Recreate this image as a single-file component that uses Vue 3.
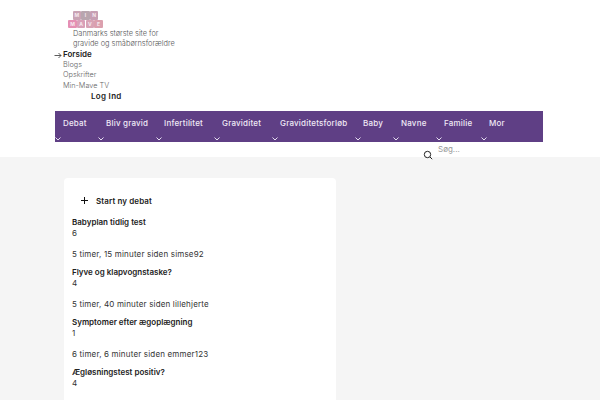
<script setup>
const menu = [
  { label: 'Forside', bold: true },
  { label: 'Blogs' },
  { label: 'Opskrifter' },
  { label: 'Min-Mave TV' }
]
const nav = [
  { t: 'Debat', w: 43 },
  { t: 'Bliv gravid', w: 58 },
  { t: 'Infertilitet', w: 58 },
  { t: 'Graviditet', w: 58 },
  { t: 'Graviditetsforløb', w: 83 },
  { t: 'Baby', w: 38 },
  { t: 'Navne', w: 43 },
  { t: 'Familie', w: 45 },
  { t: 'Mor', w: 60 }
]
const posts = [
  { title: 'Babyplan tidlig test', n: 6, meta: '5 timer, 15 minuter siden simse92' },
  { title: 'Flyve og klapvognstaske?', n: 4, meta: '5 timer, 40 minuter siden lillehjerte' },
  { title: 'Symptomer efter ægoplægning', n: 1, meta: '6 timer, 6 minuter siden emmer123' },
  { title: 'Ægløsningstest positiv?', n: 4, meta: '' }
]
const blocks = [
  [{ l: 'M', c: '#c9a3b4' }, { l: 'I', c: '#b8a6ae' }, { l: 'N', c: '#c79fb3' }],
  [{ l: 'M', c: '#e58fb4' }, { l: 'A', c: '#d9a0b8' }, { l: 'V', c: '#d8a3b5' }, { l: 'E', c: '#dba0ae' }]
]
</script>

<template>
  <div class="page">
    <header class="top">
      <div class="wrap">
        <div class="logo">
          <div v-for="(row, i) in blocks" :key="i" class="logo-row">
            <span v-for="(b, j) in row" :key="j" class="block" :style="{ background: b.c }">{{ b.l }}</span>
          </div>
        </div>
        <p class="tagline">Danmarks største site for<br>gravide og småbørnsforældre</p>
        <ul class="menu">
          <li v-for="m in menu" :key="m.label" :class="{ bold: m.bold }">
            <svg v-if="m.bold" class="arrow" width="8" height="8" viewBox="0 0 8 8"><path d="M0.5 4.5H7M4.5 2L7 4.5L4.5 7" fill="none" stroke="#333" stroke-width="0.8"/></svg>
            {{ m.label }}
          </li>
        </ul>
        <div class="login">Log Ind</div>
        <nav class="nav">
          <div v-for="n in nav" :key="n.t" class="nav-item" :style="{ width: n.w + 'px' }">
            <span class="nav-label">{{ n.t }}</span>
            <svg class="chev" width="6" height="4" viewBox="0 0 6 4"><path d="M0.5 0.5L3 3L5.5 0.5" fill="none" stroke="#e6def0" stroke-width="1"/></svg>
          </div>
        </nav>
        <div class="search">
          <svg width="10" height="10" viewBox="0 0 10 10"><circle cx="4.5" cy="4.5" r="3.2" fill="none" stroke="#222" stroke-width="1"/><path d="M7 7L9.2 9.2" stroke="#222" stroke-width="1"/></svg>
          <span class="search-text">Søg...</span>
        </div>
      </div>
    </header>
    <main class="main">
      <section class="card">
        <div class="start">
          <svg width="7" height="7" viewBox="0 0 7 7"><path d="M3.5 0V7M0 3.5H7" stroke="#111" stroke-width="1"/></svg>
          <span>Start ny debat</span>
        </div>
        <article v-for="p in posts" :key="p.title" class="post">
          <div class="title">{{ p.title }}</div>
          <div class="count">{{ p.n }}</div>
          <div class="meta">{{ p.meta }}</div>
        </article>
      </section>
    </main>
  </div>
</template>

<style>
html, body { margin: 0; background: #fff; }
</style>

<style scoped>
.page {
  width: 600px;
  height: 400px;
  overflow: hidden;
  font-family: Inter, sans-serif;
  font-size: 8px;
  color: #333;
  background: #f5f5f5;
}
.top { background: #fff; height: 157px; }
.wrap { margin-left: 55px; width: 488px; padding-top: 11px; }
.logo { margin-left: 13px; width: 35px; height: 18px; display: flex; flex-direction: column; align-items: center; }
.logo-row { display: flex; gap: 0.5px; }
.block { width: 8.2px; height: 8.5px; border-radius: 1px; font-size: 5px; line-height: 8.5px; text-align: center; color: #f6e8ef; font-weight: 700; overflow: hidden; }
.tagline { margin: 0 0 0 18px; line-height: 10px; color: #555; font-size: 7.4px; font-weight: 300; }
.menu { list-style: none; margin: 0; padding: 0 0 0 8px; }
.menu li { line-height: 10.5px; position: relative; color: #666; font-weight: 300; font-size: 7.3px; }
.menu li.bold { font-weight: 600; color: #222; font-size: 8px; }
.arrow { position: absolute; left: -9px; top: 2px; }
.login { margin-left: 36px; font-weight: 600; color: #222; line-height: 10px; letter-spacing: 0.3px; }
.nav { background: #5f3f85; height: 31px; margin-top: 10px; display: flex; box-sizing: border-box; }
.nav-item { position: relative; box-sizing: border-box; padding: 7px 0 0 8px; color: #efe9f5; font-weight: 500; white-space: nowrap; letter-spacing: 0.2px; line-height: 10px; }
.chev { position: absolute; left: 0; bottom: 1px; }
.search { display: flex; margin-left: 368px; margin-top: 2px; gap: 5px; align-items: flex-start; }
.search svg { margin-top: 6px; }
.search-text { color: #999; line-height: 11px; }
.main { padding: 21px 0 0 64px; }
.card { width: 272px; background: #fff; border-radius: 4px; padding: 17px 8px 0; box-sizing: border-box; height: 300px; }
.start { display: flex; align-items: center; gap: 8px; margin-left: 9px; font-weight: 600; color: #222; height: 11px; margin-bottom: 11px; letter-spacing: 0.1px; }
.post { margin-bottom: 8px; }
.title { font-weight: 600; color: #222; line-height: 10.5px; }
.count { line-height: 10.5px; color: #333; }
.meta { margin-top: 11px; line-height: 10px; color: #333; height: 10px; letter-spacing: 0.17px; }
</style>
